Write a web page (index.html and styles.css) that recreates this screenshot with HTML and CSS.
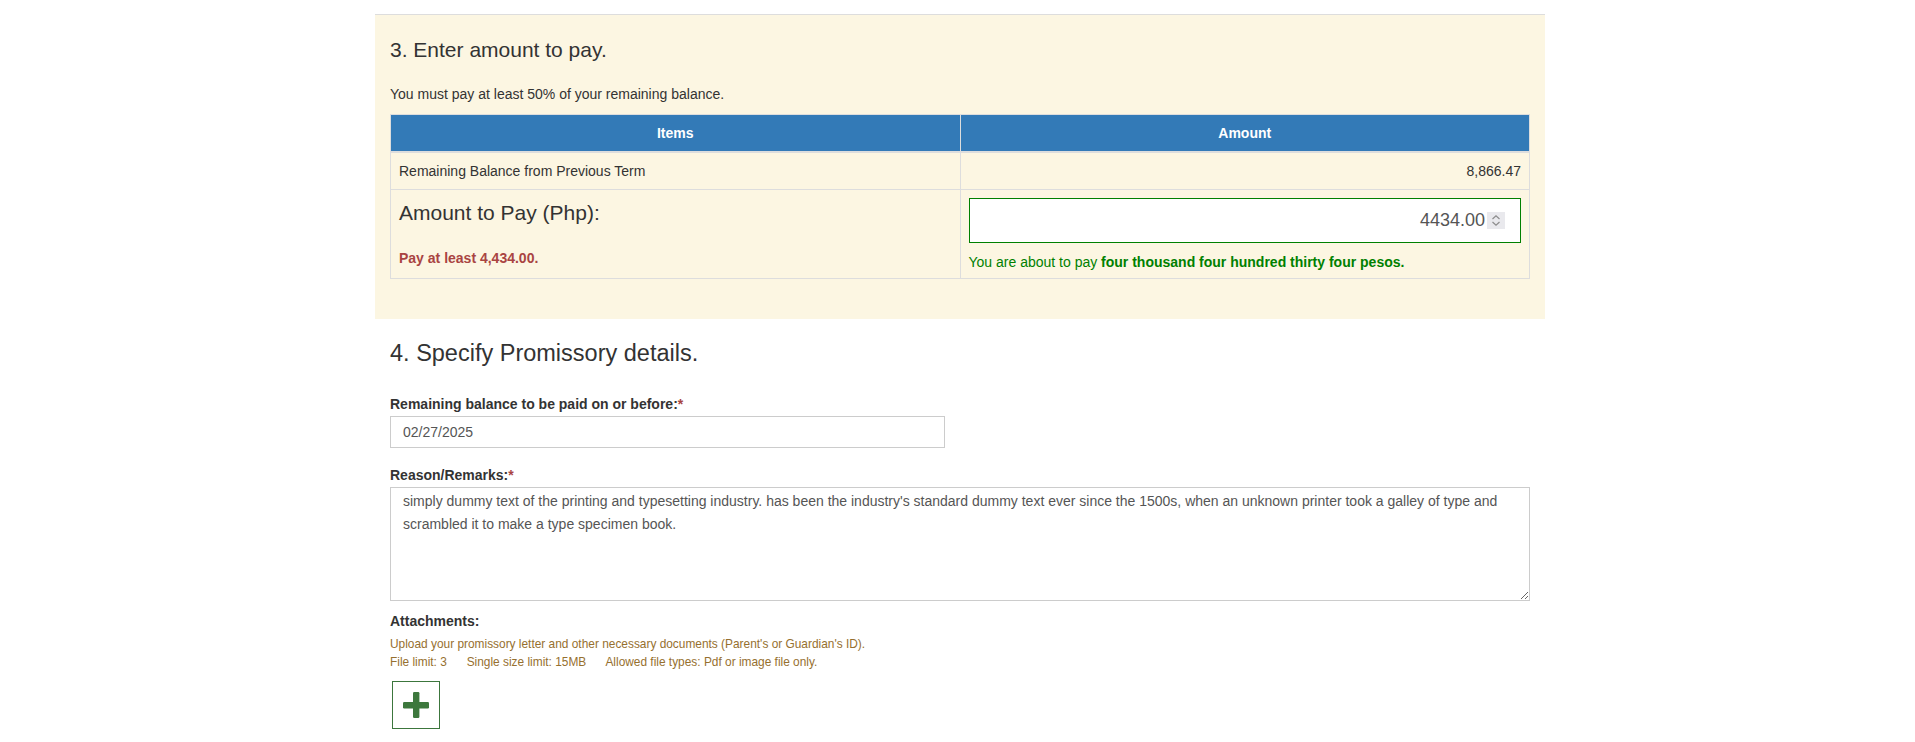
FILE: index.html
```html
<!DOCTYPE html>
<html lang="en">
<head>
  <meta charset="UTF-8" />
  <meta name="viewport" content="width=device-width, initial-scale=1.0"/>
  <title>Promissory Payment</title>
  <link rel="stylesheet" href="styles.css">
</head>
<body>

  <div class="page">

    <div class="step step-pay">
      <h4 class="step-title">3. Enter amount to pay.</h4>
      <p class="step-note">You must pay at least 50% of your remaining balance.</p>

      <table class="pay-table">
        <thead>
          <tr>
            <th>Items</th>
            <th>Amount</th>
          </tr>
        </thead>
        <tbody>
          <tr>
            <td>Remaining Balance from Previous Term</td>
            <td class="num">8,866.47</td>
          </tr>
          <tr class="pay-row">
            <td>
              <div class="pay-label">Amount to Pay (Php):</div>
              <div class="pay-min">Pay at least 4,434.00.</div>
            </td>
            <td>
              <div class="amount-field">
                <input type="text" class="amount-input" value="4434.00" />
                <span class="spin">
                  <svg width="18" height="17" viewBox="0 0 18 17">
                    <polyline points="5.5,7 9,3.8 12.5,7" fill="none" stroke="#8c8c8c" stroke-width="1.2"/>
                    <polyline points="5.5,10 9,13.2 12.5,10" fill="none" stroke="#8c8c8c" stroke-width="1.2"/>
                  </svg>
                </span>
              </div>
              <div class="pay-words">You are about to pay <b>four thousand four hundred thirty four pesos.</b></div>
            </td>
          </tr>
        </tbody>
      </table>
    </div>

    <div class="step step-promissory">
      <h4 class="step-title">4. Specify Promissory details.</h4>

      <div class="field">
        <label>Remaining balance to be paid on or before:<span class="req">*</span></label>
        <input type="text" class="form-input date-input" value="02/27/2025" />
      </div>

      <div class="field">
        <label>Reason/Remarks:<span class="req">*</span></label>
        <textarea class="form-input remarks">simply dummy text of the printing and typesetting industry. has been the industry's standard dummy text ever since the 1500s, when an unknown printer took a galley of type and scrambled it to make a type specimen book.</textarea>
      </div>

      <div class="field field-last">
        <label>Attachments:</label>
        <div class="help">
          Upload your promissory letter and other necessary documents (Parent's or Guardian's ID).<br>
          File limit: 3 &nbsp;&nbsp;&nbsp;&nbsp; Single size limit: 15MB &nbsp;&nbsp;&nbsp;&nbsp; Allowed file types: Pdf or image file only.
        </div>
        <button class="add-file" title="Add file">
          <svg width="26" height="26" viewBox="0 0 26 26">
            <rect x="10" y="0" width="6.4" height="26" rx="1.2" fill="#3d783d"/>
            <rect x="0" y="10" width="26" height="6.4" rx="1.2" fill="#3d783d"/>
          </svg>
        </button>
      </div>
    </div>

  </div>

</body>
</html>
```

FILE: styles.css
```css
* {
  box-sizing: border-box;
}

body {
  margin: 0;
  padding: 14px 0 0 5px;
  background-color: #fff;
  font-family: "Liberation Sans", Arial, sans-serif;
  font-size: 14px;
  line-height: 20px;
  color: #333;
}

.page {
  width: 1170px;
  margin: 0 auto;
}

.step {
  padding: 0 15px;
}

.step-pay {
  background-color: #fcf6e2;
  border-top: 1px solid #ddd;
  padding-bottom: 40px;
}

.step-title {
  margin: 23px 0;
  font-size: 21px;
  font-weight: normal;
  line-height: 1.1;
}

.step-promissory .step-title {
  margin: 22px 0 27px 0;
  font-size: 23.5px;
}

.step-note {
  margin: 0 0 10px 0;
}

.pay-table {
  width: 100%;
  border-collapse: collapse;
}

.pay-table th,
.pay-table td {
  width: 50%;
  padding: 8px;
  border: 1px solid #ddd;
  vertical-align: top;
}

.pay-table th {
  background-color: #337ab7;
  color: #fff;
  text-align: center;
  border-bottom-width: 2px;
}

.pay-table .num {
  text-align: right;
}

.pay-row td {
  padding-bottom: 6px;
}

.pay-label {
  padding-top: 3px;
  font-size: 21px;
  line-height: 1.1;
}

.pay-min {
  margin-top: 24px;
  color: #a94442;
  font-weight: bold;
}

.amount-field {
  position: relative;
}

.amount-input {
  display: block;
  width: 100%;
  height: 45px;
  padding: 0 35px 0 12px;
  border: 1px solid #008000;
  background-color: #fff;
  font-family: inherit;
  font-size: 18px;
  color: #555;
  text-align: right;
  outline: none;
}

.spin {
  position: absolute;
  top: 14px;
  right: 16px;
  width: 18px;
  height: 17px;
  background-color: #e9e9ed;
}

.spin svg {
  display: block;
}

.pay-words {
  margin-top: 9px;
  color: #008000;
}

.field {
  margin-bottom: 17px;
}

.field-last {
  margin-bottom: 0;
}

.field label {
  display: block;
  margin-bottom: 2px;
  font-weight: bold;
}

.req {
  color: #a94442;
}

.form-input {
  display: block;
  border: 1px solid #ccc;
  background-color: #fff;
  font-family: inherit;
  font-size: 14px;
  color: #555;
  outline: none;
}

.date-input {
  width: 555px;
  height: 32px;
  padding: 0 12px;
}

.remarks {
  width: 100%;
  height: 114px;
  padding: 2px 12px;
  line-height: 23px;
  resize: vertical;
}

.step-promissory .field:nth-child(3) {
  margin-bottom: 10px;
}

.help {
  margin-top: 4px;
  font-size: 11.9px;
  line-height: 18px;
  color: #96702f;
}

.add-file {
  display: flex;
  align-items: center;
  justify-content: center;
  width: 48px;
  height: 48px;
  margin: 10px 0 0 2px;
  padding: 0;
  border: 1px solid #3c763d;
  background-color: #fff;
  cursor: pointer;
}
```
